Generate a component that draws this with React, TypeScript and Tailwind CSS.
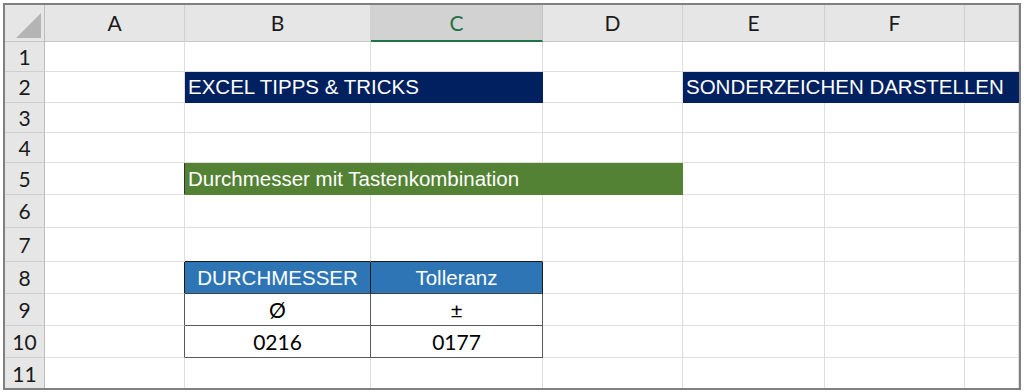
type CellDef = {
  span?: number;
  text?: string;
  className?: string;
  r?: string;
  b?: string;
};

const navy = "bg-[#002060] text-white font-['Liberation_Sans',Arial,sans-serif] text-[20.5px] pl-[3px] pt-[1px] justify-start";
const green = "bg-[#548235] text-white font-['Liberation_Sans',Arial,sans-serif] text-[20.5px] pl-[3px] pt-[1px] justify-start";
const blue = "bg-[#2e75b6] text-white font-['Liberation_Sans',Arial,sans-serif] text-[20.5px] pt-[1px] justify-center";
const plain = "text-black font-['Lato',sans-serif] text-[21px] justify-center";

const blank = (): CellDef => ({});

const rows: CellDef[][] = [
  // 1
  [blank(), blank(), blank(), blank(), blank(), blank(), blank()],
  // 2
  [
    blank(),
    { span: 2, text: "EXCEL TIPPS & TRICKS", className: navy, r: "border-r-[#002060]", b: "border-b-[#002060]" },
    blank(),
    { span: 3, text: "SONDERZEICHEN DARSTELLEN", className: navy, r: "border-r-[#002060]", b: "border-b-[#002060]" }
  ],
  // 3
  [blank(), blank(), blank(), blank(), blank(), blank(), blank()],
  // 4
  [blank(), blank(), blank(), blank(), blank(), blank(), blank()],
  // 5
  [
    { r: "border-r-[#333333]" },
    { span: 3, text: "Durchmesser mit Tastenkombination", className: green, r: "border-r-[#548235]", b: "border-b-[#548235]" },
    blank(),
    blank(),
    blank()
  ],
  // 6
  [blank(), blank(), blank(), blank(), blank(), blank(), blank()],
  // 7
  [blank(), { b: "border-b-[#1a1a1a]" }, { b: "border-b-[#1a1a1a]" }, blank(), blank(), blank(), blank()],
  // 8
  [
    { r: "border-r-[#1a1a1a]" },
    { text: "DURCHMESSER", className: blue, r: "border-r-[#1a1a1a]", b: "border-b-[#404040]" },
    { text: "Tolleranz", className: blue, r: "border-r-[#1a1a1a]", b: "border-b-[#404040]" },
    blank(),
    blank(),
    blank(),
    blank()
  ],
  // 9
  [
    { r: "border-r-[#595959]" },
    { text: "Ø", className: plain, r: "border-r-[#595959]", b: "border-b-[#595959]" },
    { text: "±", className: plain, r: "border-r-[#595959]", b: "border-b-[#595959]" },
    blank(),
    blank(),
    blank(),
    blank()
  ],
  // 10
  [
    { r: "border-r-[#595959]" },
    { text: "0216", className: plain, r: "border-r-[#595959]", b: "border-b-[#595959]" },
    { text: "0177", className: plain, r: "border-r-[#595959]", b: "border-b-[#595959]" },
    blank(),
    blank(),
    blank(),
    blank()
  ],
  // 11
  [blank(), blank(), blank(), blank(), blank(), blank(), blank()]
];

const colSpan: Record<number, string> = {
  1: "col-span-1",
  2: "col-span-2",
  3: "col-span-3"
};

const letters = ["A", "B", "C", "D", "E", "F", ""];

const App = () => {
  return (
    <div className="w-[1024px] h-[392px] bg-white p-[3px]">
      <div className="w-[1018px] h-[387px] border-2 border-[#808080] overflow-hidden">
        <div className="grid h-full grid-cols-[40px_140px_186px_172px_140px_142px_140px_1fr] grid-rows-[37px_30px_31px_30px_30px_32px_33px_34px_32px_32px_32px_1fr]">
          {/* corner */}
          <div className="bg-[#e6e6e6] border-r border-b border-r-[#bdbdbd] border-b-[#c8c8c8] flex items-end justify-end pr-[3px] pb-[3px]">
            <div className="w-[25px] h-[25px] bg-[#b4b4b4] [clip-path:polygon(100%_0,100%_100%,0_100%)]" />
          </div>
          {letters.map((letter, i) =>
            letter === "C" ? (
              <div
                key={i}
                className="bg-[#d2d2d2] border-r border-r-[#c4c4c4] border-b-2 border-b-[#217346] flex items-center justify-center text-[#217346] font-['Lato',sans-serif] text-[21px]"
              >
                {letter}
              </div>
            ) : (
              <div
                key={i}
                className="bg-[#e6e6e6] border-r border-b border-r-[#d0d0d0] border-b-[#c8c8c8] flex items-center justify-center text-[#1a1a1a] font-['Lato',sans-serif] text-[21px]"
              >
                {letter}
              </div>
            )
          )}

          {rows.map((row, ri) => (
            <div key={ri} className="contents">
              <div className="bg-[#e6e6e6] border-r border-b border-r-[#bdbdbd] border-b-[#cfcfcf] flex items-center justify-center text-[#1a1a1a] font-['Lato',sans-serif] text-[21px]">
                {ri + 1}
              </div>
              {row.map((cell, ci) => (
                <div
                  key={ci}
                  className={`${colSpan[cell.span ?? 1]} border-r border-b ${cell.r ?? "border-r-[#dedede]"} ${
                    cell.b ?? "border-b-[#dedede]"
                  } flex items-center whitespace-nowrap overflow-hidden ${cell.className ?? ""}`}
                >
                  {cell.text}
                </div>
              ))}
            </div>
          ))}
        </div>
      </div>
    </div>
  );
};

export default App;
